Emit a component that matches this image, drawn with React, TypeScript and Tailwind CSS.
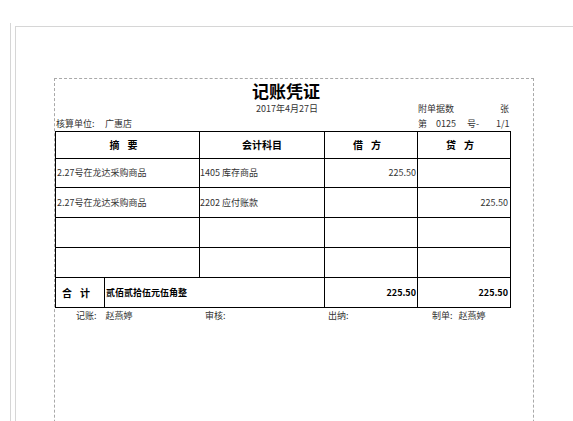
const font = { fontFamily: '"Noto Sans CJK SC", "Liberation Sans", sans-serif' }

const rows = [
  { summary: '2.27号在龙达采购商品', account: '1405 库存商品', debit: '225.50', credit: '', h: 'h-[29px]' },
  { summary: '2.27号在龙达采购商品', account: '2202 应付账款', debit: '', credit: '225.50', h: 'h-[30px]' },
  { summary: '', account: '', debit: '', credit: '', h: 'h-[30px]' },
  { summary: '', account: '', debit: '', credit: '', h: 'h-[30px]' },
]

export default function App() {
  return (
    <div className="h-[421px] w-[573px] overflow-hidden bg-white pl-[10px] pt-[23px]" style={font}>
      <div className="h-full border-l border-[#d6d6d6] pl-[4px] pt-[3px]">
        <div className="h-full border-l border-t border-[#d6d6d6] pl-[38px] pt-[51px]">
          <div className="h-[400px] w-[480px] border border-dashed border-[#a9a9a9] text-[9px] leading-[14px] text-[#333]">
            {/* title */}
            <div className="h-[23px] pl-[197px] text-[17px] font-bold leading-[23px] text-black">记账凭证</div>

            <div className="flex h-[14px] items-center">
              <div className="w-[363px] pl-[201px]">2017年4月27日</div>
              <div className="flex w-[93px] justify-between pr-[2px]">
                <span>附单据数</span>
                <span>张</span>
              </div>
            </div>

            <div className="flex h-[15px] items-center">
              <div className="flex w-[363px] pl-[1px]">
                <span className="w-[49px]">核算单位:</span>
                <span>广惠店</span>
              </div>
              <div className="flex w-[93px]">
                <span className="w-[18px]">第</span>
                <span className="w-[31px]">0125</span>
                <span className="w-[29px]">号-</span>
                <span>1/1</span>
              </div>
            </div>

            {/* voucher table */}
            <div className="w-[456px] border-l border-t border-black">
              <div className="flex h-[27px] border-b border-black text-[10px] font-bold text-black">
                <div className="flex w-[144px] items-center justify-center border-r border-black tracking-[8px]">摘要</div>
                <div className="flex w-[125px] items-center justify-center border-r border-black">会计科目</div>
                <div className="flex w-[93px] items-center justify-center border-r border-black tracking-[8px]">借方</div>
                <div className="flex w-[93px] items-center justify-center border-r border-black tracking-[8px]">贷方</div>
              </div>

              {rows.map((r, i) => (
                <div key={i} className={`flex border-b border-black ${r.h}`}>
                  <div className="flex w-[144px] items-center border-r border-black pl-[1px]">{r.summary}</div>
                  <div className="flex w-[125px] items-center border-r border-black">{r.account}</div>
                  <div className="flex w-[93px] items-center justify-end border-r border-black pr-[1px]">{r.debit}</div>
                  <div className="flex w-[93px] items-center justify-end border-r border-black pr-[2px]">{r.credit}</div>
                </div>
              ))}

              <div className="flex h-[30px] border-b border-black font-bold text-black">
                <div className="flex w-[49px] items-center justify-center border-r border-black text-[10px] tracking-[8px]">合计</div>
                <div className="flex w-[220px] items-center border-r border-black pl-[1px]">贰佰贰拾伍元伍角整</div>
                <div className="flex w-[93px] items-center justify-end border-r border-black pr-[1px]">225.50</div>
                <div className="flex w-[93px] items-center justify-end border-r border-black pr-[2px]">225.50</div>
              </div>
            </div>

            {/* signatures */}
            <div className="flex h-[16px] items-center pl-[21px]">
              <span className="w-[129px]">
                记账:<span className="ml-[9px]">赵燕婷</span>
              </span>
              <span className="w-[123px]">审核:</span>
              <span className="w-[104px]">出纳:</span>
              <span>
                制单:<span className="ml-[6px]">赵燕婷</span>
              </span>
            </div>
          </div>
        </div>
      </div>
    </div>
  )
}
